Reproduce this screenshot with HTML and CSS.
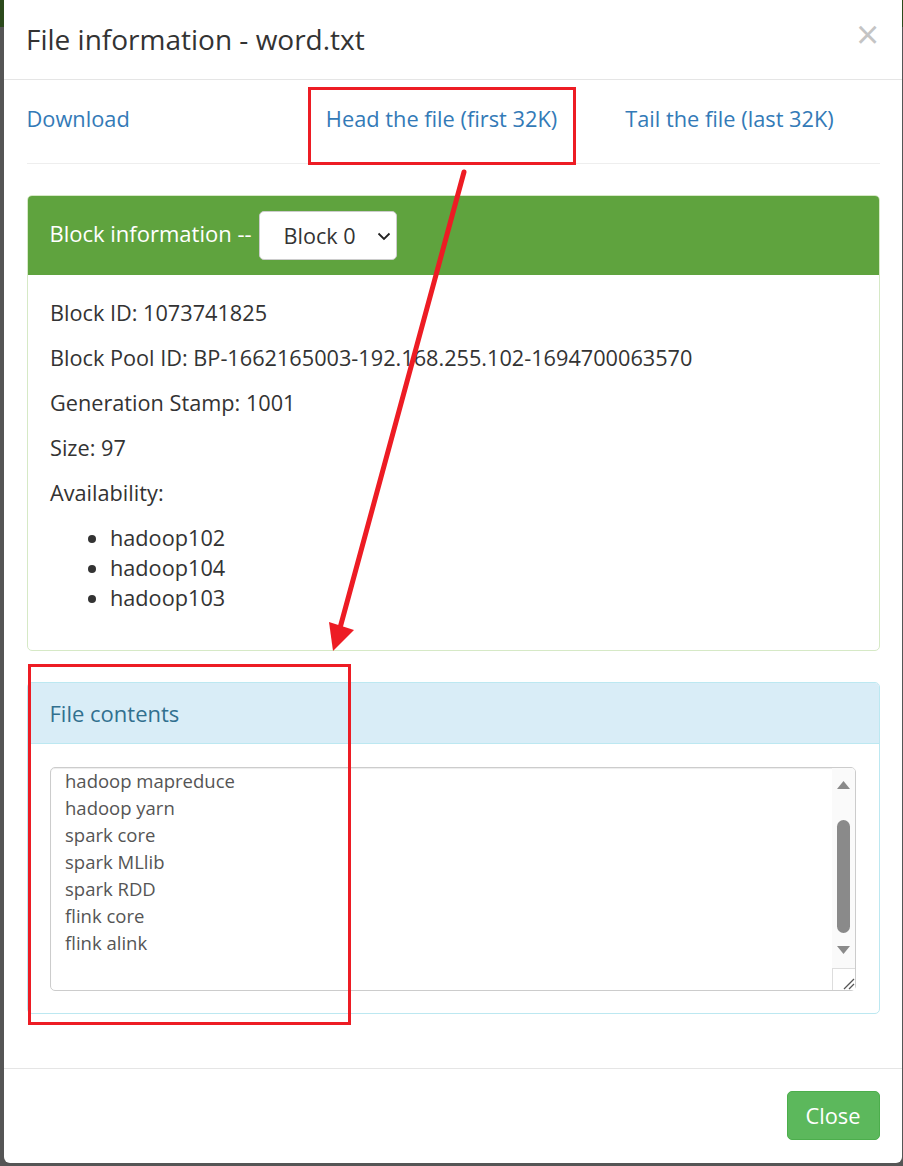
FILE: index.html
```html
<!DOCTYPE html>
<html lang="en">
<head>
<meta charset="utf-8">
<title>File information - word.txt</title>
<link rel="stylesheet" href="styles.css">
</head>
<body>
<div class="modal">
  <div class="modal-header">
    <h4 class="modal-title">File information - word.txt</h4>
    <span class="close">×</span>
  </div>
  <div class="modal-body">
    <div class="links">
      <a href="#">Download</a>
      <a href="#">Head the file (first 32K)</a>
      <a href="#">Tail the file (last 32K)</a>
    </div>
    <hr class="sep">
    <div class="panel panel-success">
      <div class="panel-heading">
        <span class="heading-text">Block information --</span>
        <div class="select-wrap">
          <select class="block-select"><option>Block 0</option></select>
          <svg class="chev" width="14" height="9" viewBox="0 0 14 9"><path d="M1.5 1.5 L7 7 L12.5 1.5" fill="none" stroke="#222" stroke-width="1.8"/></svg>
        </div>
      </div>
      <div class="panel-body">
        <p>Block ID: 1073741825</p>
        <p>Block Pool ID: BP-1662165003-192.168.255.102-1694700063570</p>
        <p>Generation Stamp: 1001</p>
        <p>Size: 97</p>
        <p>Availability:</p>
        <ul class="hosts">
          <li>hadoop102</li>
          <li>hadoop104</li>
          <li>hadoop103</li>
        </ul>
      </div>
    </div>
    <div class="panel panel-info">
      <div class="panel-heading info-heading">File contents</div>
      <div class="panel-body">
        <div class="ta-wrap">
          <textarea class="contents" readonly>hadoop hdfs
hadoop mapreduce
hadoop yarn
spark core
spark MLlib
spark RDD
flink core
flink alink
</textarea>
          <div class="fake-scroll">
            <div class="sb-btn sb-up"><svg width="13" height="8" viewBox="0 0 13 8"><polygon points="0,8 13,8 6.5,0" fill="#8a8a8a"/></svg></div>
            <div class="sb-track"><div class="sb-thumb"></div></div>
            <div class="sb-btn sb-down"><svg width="13" height="8" viewBox="0 0 13 8"><polygon points="0,0 13,0 6.5,8" fill="#8a8a8a"/></svg></div>
            <div class="sb-resizer"><svg width="14" height="14" viewBox="0 0 14 14"><path d="M13 3 L3 13 M13 8 L8 13" stroke="#555" stroke-width="1.3"/></svg></div>
          </div>
        </div>
      </div>
    </div>
  </div>
  <div class="modal-footer">
    <button class="btn-close">Close</button>
  </div>
</div>
<svg class="annot" width="903" height="1166" viewBox="0 0 903 1166">
  <rect x="309.5" y="88.5" width="265" height="75" fill="none" stroke="#ed1c24" stroke-width="3"/>
  <line x1="464" y1="172" x2="340" y2="628" stroke="#ed1c24" stroke-width="5" stroke-linecap="round"/>
  <polygon points="333,651 329,622 354,630" fill="#ed1c24"/>
  <rect x="29.5" y="665.5" width="320" height="358" fill="none" stroke="#ed1c24" stroke-width="3"/>
</svg>
<script src="app.js"></script>
</body>
</html>
```

FILE: styles.css
```css
html, body {
  margin: 0;
  padding: 0;
}
body {
  width: 903px;
  height: 1166px;
  overflow: hidden;
  background: linear-gradient(to bottom, #2c4a1c 0, #2c4a1c 27px, #555 27px);
  font-family: "Open Sans", "Noto Sans", sans-serif;
  color: #333;
  position: relative;
}
.modal {
  margin-left: 4px;
  width: 898px;
  height: 1163px;
  background: #fff;
  border-radius: 0 0 6px 6px;
  display: flex;
  flex-direction: column;
}
.modal-header {
  height: 80px;
  border-bottom: 1px solid #e5e5e5;
  display: flex;
  align-items: center;
  justify-content: space-between;
  padding: 0 23px 0 22px;
}
.modal-title {
  margin: 0;
  font-size: 28px;
  font-weight: 400;
  color: #333;
  padding-bottom: 1px;
}
.close {
  font-size: 40px;
  font-weight: 400;
  color: #c4c4c4;
  line-height: 1;
  margin-top: -12px;
}
.modal-body {
  padding: 24px 22.5px 23px;
  flex: 1;
}
.links {
  display: grid;
  grid-template-columns: repeat(3, 1fr);
  column-gap: 45px;
  font-size: 21.8px;
  line-height: 30px;
}
.links a {
  color: #337ab7;
  text-decoration: none;
}
.sep {
  border: 0;
  border-top: 1px solid #eee;
  margin: 29px 0 31px;
}
.panel {
  border: 1px solid #d6e9c6;
  border-radius: 5px;
  margin-bottom: 31px;
  overflow: hidden;
}
.panel-success .panel-heading {
  background: #5fa33e;
  color: #fff;
  padding: 15px 22px;
  display: flex;
  align-items: center;
  gap: 7px;
  height: 49px;
}
.heading-text {
  font-size: 22px;
  padding-bottom: 6px;
}
.select-wrap {
  position: relative;
  width: 138px;
  height: 49px;
}
.block-select {
  appearance: none;
  -webkit-appearance: none;
  width: 138px;
  height: 49px;
  border: 1px solid #ccc;
  border-radius: 5px;
  background: #fff;
  font-family: inherit;
  font-size: 21.6px;
  color: #333;
  padding: 0 0 0 24px;
}
.chev {
  position: absolute;
  right: 6px;
  top: 21px;
}
.panel-body {
  padding: 22.5px;
  font-size: 21.7px;
  line-height: 30px;
}
.panel-body p {
  margin: 0 0 15px;
}
.hosts {
  margin: 0 0 15px;
  padding-left: 60px;
}
.panel-info {
  border-color: #bce8f1;
}
.info-heading {
  background: #d9edf7;
  color: #31708f;
  border-bottom: 1px solid #bce8f1;
  padding: 15px 22px;
  font-size: 22px;
  line-height: 30px;
}
.ta-wrap {
  position: relative;
  width: 806px;
  height: 224px;
}
.contents {
  display: block;
  box-sizing: border-box;
  width: 806px;
  height: 224px;
  border: 1px solid #ccc;
  border-radius: 5px;
  padding: 9px 30px 9px 14px;
  font-family: inherit;
  font-size: 18.5px;
  line-height: 27px;
  color: #555;
  resize: none;
  overflow: hidden;
  margin: 0;
  box-shadow: inset 0 1px 1px rgba(0,0,0,.075);
}
.fake-scroll {
  position: absolute;
  right: 1px;
  top: 1px;
  bottom: 1px;
  width: 23px;
  background: #fafafa;
  display: flex;
  flex-direction: column;
  border-radius: 0 4px 4px 0;
}
.sb-btn {
  height: 22px;
  display: flex;
  align-items: center;
  justify-content: center;
}
.sb-up {
  margin-top: 6px;
}
.sb-down {
  margin-bottom: 7px;
}
.sb-track {
  flex: 1;
  display: flex;
  flex-direction: column;
  align-items: center;
  padding-top: 24px;
}
.sb-thumb {
  width: 13px;
  height: 113px;
  border-radius: 7px;
  background: #8a8a8a;
}
.sb-resizer {
  height: 22px;
  box-sizing: border-box;
  border-top: 1px solid #ddd;
  border-left: 1px solid #ddd;
  background: #fff;
  display: flex;
  align-items: flex-end;
  justify-content: flex-end;
}
.modal-footer {
  border-top: 1px solid #e5e5e5;
  padding: 22px 22.5px 23px;
  display: flex;
  justify-content: flex-end;
}
.btn-close {
  background: #5cb85c;
  border: 1px solid #4cae4c;
  border-radius: 5px;
  color: #fff;
  font-family: inherit;
  font-size: 21.8px;
  width: 93px;
  height: 49px;
  padding: 0;
}
.annot {
  position: absolute;
  left: 0;
  top: 0;
  pointer-events: none;
}
```

FILE: app.js
```js
document.querySelector('.contents').scrollTop = 37;
```
